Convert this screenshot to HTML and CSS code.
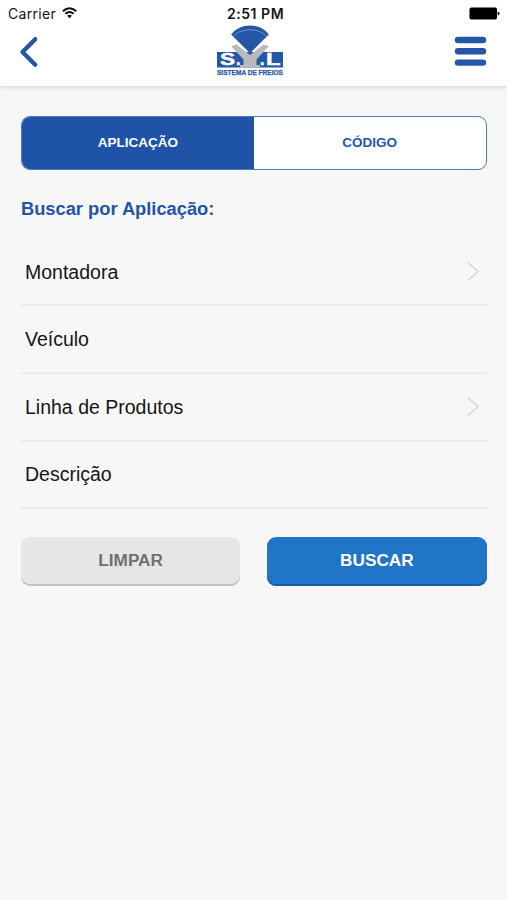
FILE: index.html
```html
<!DOCTYPE html>
<html lang="pt-BR">
<head>
<meta charset="utf-8">
<meta name="viewport" content="width=device-width, initial-scale=1">
<title>SYL Sistema de Freios</title>
<link rel="stylesheet" href="styles.css">
</head>
<body>
<header class="header">
  <div class="status">
    <div class="carrier"><span>Carrier</span>
      <svg width="15" height="12" viewBox="0 0 15 12" fill="none" stroke="#111" stroke-width="2"><path d="M.8 4.2Q7.5-1.8 14.2 4.2M3.3 6.8Q7.5 3.1 11.7 6.8"/><path d="M5.1 8.7Q7.5 6.8 9.9 8.7L7.5 11.3Z" fill="#111" stroke="none"/></svg>
    </div>
    <div class="time">2:51 PM</div>
    <svg class="battery" width="31" height="13" viewBox="0 0 31 13"><rect x=".5" y=".5" width="27.5" height="12" rx="1.8"/><path d="M28.7 4.5Q30.5 5 30.5 6.5T28.7 8.5Z"/></svg>
  </div>
  <nav class="navbar">
    <svg class="back" width="20" height="32" viewBox="0 0 20 32" fill="none" stroke="#2457a8" stroke-width="4.4" stroke-linecap="round" stroke-linejoin="round"><path d="M16.2 3.2 3.5 16 16.2 28.7"/></svg>
    <svg class="logo" width="88" height="54" viewBox="-10 0 88 54">
      <rect x="1" y="27" width="66" height="15.5" fill="#2457a8"/>
      <path d="M15 21 20.5 19.5 34 30 47.5 19.5 53 21 40.5 34.5V40H44V42.5H24V40H27.5V34.5Z" fill="#b9babd"/>
      <path d="M15.2 9.5C24-2.5 44-2.5 52.8 9.5L34 28.3Z" fill="#2457a8"/>
      <path d="M17.3 11.5C25 2.5 43 2.5 50.7 11.5" fill="none" stroke="#91acd3" stroke-width=".7"/>
      <g class="letters"><text x="4" y="40.2" textLength="15" lengthAdjust="spacingAndGlyphs">S</text><text x="20" y="40.2">.</text><text x="44" y="40.2">.</text><text x="50" y="40.2" textLength="14.5" lengthAdjust="spacingAndGlyphs">L</text></g>
      <text class="tagline" x="1" y="50.3" textLength="66" lengthAdjust="spacingAndGlyphs">SISTEMA DE FREIOS</text>
    </svg>
    <svg class="menu" width="33" height="31" viewBox="0 0 33 31" stroke="#2457a8" stroke-width="6.4" stroke-linecap="round"><path d="M4 4H29M4 15.3H29M4 26.6H29"/></svg>
  </nav>
</header>
<main class="content">
  <div class="tabs"><div class="tab active">APLICAÇÃO</div><div class="tab">CÓDIGO</div></div>
  <h1 class="title">Buscar por Aplicação:</h1>
  <div class="fields">
    <div class="row"><span>Montadora</span><svg class="chevron" width="14" height="21" viewBox="0 0 14 21"><path d="M2 1.5 12 10.5 2 19.5"/></svg></div>
    <div class="row"><span>Veículo</span></div>
    <div class="row"><span>Linha de Produtos</span><svg class="chevron" width="14" height="21" viewBox="0 0 14 21"><path d="M2 1.5 12 10.5 2 19.5"/></svg></div>
    <div class="row"><span>Descrição</span></div>
  </div>
  <div class="actions"><button class="button clear">LIMPAR</button><button class="button search">BUSCAR</button></div>
</main>
</body>
</html>
```
FILE: styles.css
```css
* { box-sizing: border-box; }
body {
  margin: 0;
  min-height: 100vh;
  background: #f7f7f7;
  color: #151515;
  font-family: "Liberation Sans", Arial, sans-serif;
}
svg { display: block; }
.header {
  height: 86px;
  background: #fff;
  box-shadow: 0 1px 5px rgba(0, 0, 0, .15);
}
.status {
  height: 25px;
  padding: 1px 7px 0 8px;
  display: grid;
  grid-template-columns: 1fr auto 1fr;
  align-items: center;
  font-family: Inter, sans-serif;
  font-size: 14px;
}
.carrier { display: flex; align-items: center; gap: 6px; letter-spacing: .3px; }
.time { margin-left: 3px; font-weight: 600; letter-spacing: .55px; }
.battery { justify-self: end; }
.navbar {
  height: 54px;
  padding: 0 20px 0 19px;
  display: grid;
  grid-template-columns: 1fr auto 1fr;
  align-items: center;
}
.logo { margin-right: 6px; }
.menu { justify-self: end; margin-top: -2px; }
.letters {
  fill: #fff;
  stroke: #fff;
  stroke-width: .5px;
  font: bold 16px "Liberation Sans", sans-serif;
}
.tagline { fill: #2457a8; stroke: #2457a8; stroke-width: .25px; font: bold 7.2px "Liberation Sans", sans-serif; }
.content { padding: 29.5px 20.5px 0 21px; }
.tabs {
  height: 54px;
  display: flex;
  border: 1.5px solid #4f79bb;
  border-radius: 9px;
  overflow: hidden;
  background: #fff;
}
.tab {
  flex: 1;
  display: flex;
  align-items: center;
  justify-content: center;
  color: #2457a8;
  font-size: 13.5px;
  font-weight: bold;
}
.tab.active { background: #1f53a8; color: #fff; }
.title {
  margin: 28px 0 0;
  height: 22px;
  line-height: 22px;
  color: #2354a9;
  font-size: 18.3px;
}
.fields { margin-top: 19.4px; }
.row {
  height: 67.6px;
  padding: 1px 7px 0 4px;
  display: flex;
  align-items: center;
  justify-content: space-between;
  border-bottom: 2px solid #ebebeb;
  font-size: 19.5px;
}
.chevron { margin-top: -2px; fill: none; stroke: #d5d5d5; stroke-width: 1.5px; }
.actions { margin-top: 27.6px; display: flex; gap: 27px; }
.button {
  flex: 1;
  height: 49px;
  padding: 0 0 1px;
  border: 0;
  border-radius: 9px;
  font: bold 17.2px "Liberation Sans", Arial, sans-serif;
}
.clear { background: #e6e6e6; color: #707070; box-shadow: inset 0 -2px #c3c3c3; }
.search { background: #2075c9; color: #fff; box-shadow: inset 0 -2px #125da9; }
```
